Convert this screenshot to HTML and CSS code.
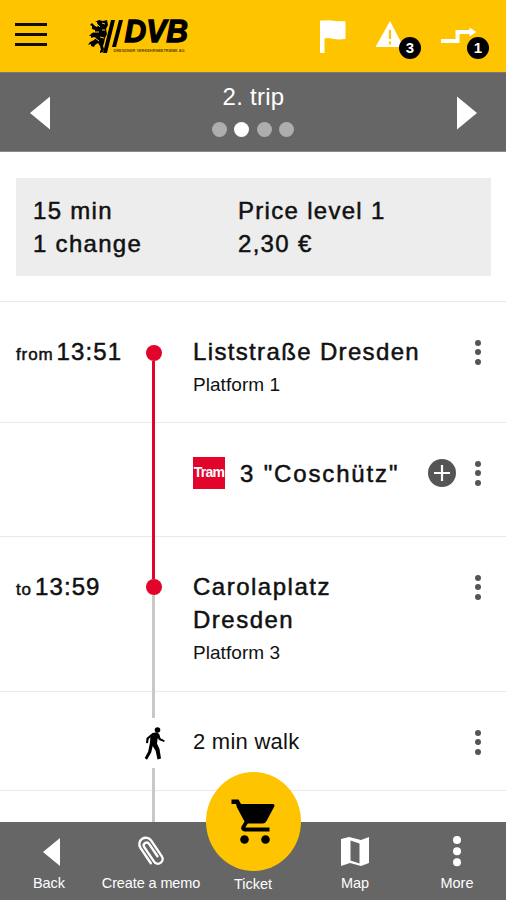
FILE: index.html
```html
<!DOCTYPE html>
<html lang="en">
<head>
<meta charset="utf-8">
<title>DVB trip details</title>
<link rel="stylesheet" href="styles.css">
</head>
<body>
<div class="app">
  <header class="topbar">
    <div class="burger"><span></span><span></span><span></span></div>
    <svg class="logo" width="110" height="46" viewBox="88 11 110 46">
      <path d="M99 20l4 1 4-1 1 5-2 4 1 5-2 4-1 5-1 3 1 3-1 3-3 1v-2l1-1-1-4-2-3-3 2-1 2-3-1v-2l-3 1 2-3 4-2 2-2-2-1-3 1v-2l-2 0 3-3 3-1v-2l-3-1 0-3-2-1 2-2 3 3 2 1 1-1-1-4-2 0z"/>
      <path class="mane" d="M96 23l4 4M102 23l3 1M94 32l5 0M100 37l4 1M95 38l4 3M102 30l3 0"/>
      <path d="M111 20h4l-8 33h-4zM119 20h4l-7 27h-4z"/>
      <text class="logo-name" x="124.500" y="42.200" textLength="63.500" lengthAdjust="spacingAndGlyphs">DVB</text>
      <text class="logo-sub" x="113.500" y="51.700" textLength="71" lengthAdjust="spacingAndGlyphs">DRESDNER VERKEHRSBETRIEBE AG</text>
    </svg>
    <div class="tools">
      <div class="tool flag">
        <svg width="28" height="34" viewBox="319 20 28 34"><path d="M320 20.500h4.500q5-.7 9 .3 5 .7 12 .5V39q-7 .8-12 0-5-1.700-9-.5V53H320z"/></svg>
      </div>
      <div class="tool alert">
        <svg width="28" height="34" viewBox="375 20 28 34"><path d="M390 21l13.500 26H375.500z"/><path class="bang" d="M390 30v9M390 41.500v3"/></svg>
        <span class="badge">3</span>
      </div>
      <div class="tool route">
        <svg width="36" height="34" viewBox="440 20 36 34"><path class="step" d="M441 41h16.500V32H471"/><path d="M469.500 27.500l7 4.500-7 4.500z"/></svg>
        <span class="badge">1</span>
      </div>
    </div>
  </header>

  <section class="tripbar">
    <svg width="20" height="34" viewBox="0 0 20 34"><path d="M20 .5v33L0 17z"/></svg>
    <div class="trip">
      <h1>2. trip</h1>
      <div class="dots"><i></i><i class="on"></i><i></i><i></i></div>
    </div>
    <svg width="20" height="34" viewBox="0 0 20 34"><path d="M0 .5v33L20 17z"/></svg>
  </section>

  <main>
    <div class="summary">
      <div>15 min<br>1 change</div>
      <div>Price level 1<br>2,30 €</div>
    </div>

    <div class="row start">
      <div class="time"><small>from</small>13:51</div>
      <div class="rail"><b class="stop"></b><b class="line red"></b></div>
      <div class="info"><div class="name">Liststraße Dresden</div><div class="platform">Platform 1</div></div>
      <div class="more"><i></i><i></i><i></i></div>
    </div>
    <div class="row ride">
      <div class="time"></div>
      <div class="rail"><b class="line red"></b></div>
      <div class="info">
        <span class="tram">Tram</span><span class="name">3 "Coschütz"</span>
        <svg class="plus" width="28" height="28" viewBox="0 0 28 28"><circle cx="14" cy="14" r="14"/><path d="M14 6v16M6 14h16"/></svg>
      </div>
      <div class="more"><i></i><i></i><i></i></div>
    </div>
    <div class="row end">
      <div class="time"><small>to</small>13:59</div>
      <div class="rail"><b class="line red lead"></b><b class="stop"></b><b class="line"></b></div>
      <div class="info"><div class="name">Carolaplatz<br>Dresden</div><div class="platform">Platform 3</div></div>
      <div class="more"><i></i><i></i><i></i></div>
    </div>
    <div class="row walk">
      <div class="time"></div>
      <div class="rail">
        <b class="line lead"></b>
        <svg width="24" height="34" viewBox="141 725 24 34"><circle cx="156.500" cy="729" r="2.800"/><path d="M151.500 732l4.500-.8 2.300 2 1.200 4 4.300 2.300-.8 1.500-5-2-1.300-2-.7 5.500 2.500 5.500 1.500 9.500-3.500 1-1.800-8.500-3-5-1.500 6.500-4.200 7.200-2.300-1.800 3.500-6.500 1.600-8 .6-6-1.700 1.600-.7 4.200-2-.2.500-5z"/></svg>
        <b class="line"></b>
      </div>
      <div class="info">2 min walk</div>
      <div class="more"><i></i><i></i><i></i></div>
    </div>
    <div class="row rest">
      <div class="time"></div>
      <div class="rail"><b class="line"></b></div>
    </div>
  </main>

  <nav class="bottombar">
    <div class="item"><svg width="32" height="32" viewBox="-1 0 32 32"><path d="M26 3v28L9 17z"/></svg>Back</div>
    <div class="item memo"><svg width="32" height="32" viewBox="0 0 32 32"><path class="clip" transform="translate(16 16) rotate(-34)" d="M-7 10V-8.500A6.500 6.500 0 0 1 6 -8.500V10.500A4.700 4.700 0 0 1 -3.400 10.500V-7A2.900 2.900 0 0 1 2.400 -7V8"/></svg>Create a memo</div>
    <div class="item ticket"><span class="cart"><svg width="44" height="48" viewBox="232 798 44 48"><path d="M232.500 799.500h7l2.500 4.500H274q2 .5 1.300 2.500l-7.500 14q-1.300 3-4 3h-15l-2.500 4H270.500v4h-25q-4.500-1-3-5l3-5-7.500-14-1-3.500h-4.500z"/><circle cx="245.500" cy="839.500" r="4.300"/><circle cx="266.500" cy="839.500" r="4.300"/></svg></span>Ticket</div>
    <div class="item"><svg width="32" height="32" viewBox="0 0 32 32"><path fill-rule="evenodd" d="M2 4l8-2 12 3 8-3v26l-8 3-11-3-9 3zM11.500 5.500v20l9 3V8.500z"/></svg>Map</div>
    <div class="item"><svg width="32" height="32" viewBox="0 0 32 32"><circle cx="16" cy="5" r="4"/><circle cx="16" cy="16.200" r="4"/><circle cx="16" cy="27.300" r="4"/></svg>More</div>
  </nav>
</div>
</body>
</html>
```
FILE: styles.css
```css
* { box-sizing: border-box; }
body {
  margin: 0;
  background: #fff;
  color: #111;
  font-family: "Liberation Sans", Arial, sans-serif;
}
svg { display: block; flex: none; }
.app {
  width: 506px;
  height: 900px;
  display: flex;
  flex-direction: column;
  overflow: hidden;
}

.topbar {
  height: 72px;
  flex: none;
  display: flex;
  background: #ffc400;
}
.burger {
  width: 32px;
  margin: 23px 0 0 14.5px;
  display: flex;
  flex-direction: column;
  gap: 7px;
}
.burger span { height: 3px; background: #120e00; }
.logo { margin: 11px 0 0 41.5px; overflow: visible; }
.mane { stroke: #ffc400; stroke-width: 1; fill: none; }
.logo-name { font: italic bold 31px "Liberation Sans", Arial, sans-serif; stroke: #000; stroke-width: 1.3px; }
.logo-sub { font: bold 4px "Liberation Sans", Arial, sans-serif; fill: #5c4700; }
.tools { display: flex; margin: 20px 0 0 121px; fill: #fff; }
.tool { position: relative; }
.alert { margin-left: 28px; }
.route { margin-left: 37px; }
.bang { stroke: #ffc400; stroke-width: 2.2; }
.step { fill: none; stroke: #fff; stroke-width: 4; }
.badge {
  position: absolute;
  right: -18px;
  top: 17px;
  width: 22px;
  height: 22px;
  border-radius: 50%;
  background: #000;
  color: #fff;
  font-size: 15px;
  font-weight: bold;
  line-height: 22px;
  text-align: center;
}
.route .badge { right: -13px; }

.tripbar {
  height: 80px;
  flex: none;
  display: flex;
  justify-content: space-between;
  padding: 23px 29px 0 30px;
  background: #666;
  border-top: 1px solid #777;
  border-bottom: 1px solid #8a8a8a;
  fill: #fff;
}
.trip { margin-top: -16px; display: flex; flex-direction: column; align-items: center; }
h1 {
  margin: 0;
  color: #fff;
  font-size: 24px;
  font-weight: normal;
  line-height: 33px;
  letter-spacing: .25px;
}
.dots { display: flex; gap: 7.2px; margin: 9px 1px 0 0; }
.dots i { width: 15px; height: 15px; border-radius: 50%; background: #aeaeae; }
.dots .on { background: #fff; }

main { flex: 1; min-height: 0; overflow: hidden; }
.summary {
  height: 98px;
  margin: 26px 15px 25px 16px;
  padding: 16px 17px;
  display: grid;
  grid-template-columns: 205px 1fr;
  background: #ededed;
  font-size: 24px;
  line-height: 33px;
  letter-spacing: 1.3px;
  -webkit-text-stroke: .5px #111;
}
.row {
  display: grid;
  grid-template-columns: 137px 33px 1fr 56px;
  border-top: 1px solid #e9e9e9;
}
.start { height: 121px; }
.ride { height: 114px; }
.end { height: 155px; }
.walk { height: 99px; }
.rest { height: 40px; }
.time {
  padding: 33px 0 0 16px;
  font-size: 24px;
  line-height: 33px;
  letter-spacing: 1.1px;
  white-space: nowrap;
  -webkit-text-stroke: .5px #111;
}
.time small { font-size: 17px; letter-spacing: .9px; margin-right: 3px; }
.rail { display: flex; flex-direction: column; align-items: center; margin-top: -1px; }
.line { flex: 1; width: 3px; background: #c9c9c9; }
.red { background: #e2042b; }
.stop { flex: none; width: 16px; height: 16px; border-radius: 50%; background: #e2042b; }
.start .stop { margin-top: 44px; }
.end .lead { flex: none; height: 43px; }
.walk .lead { flex: none; height: 27px; }
.walk .rail svg { margin: 8px 0; }
.info { padding: 33px 0 0 23px; line-height: 33px; white-space: nowrap; }
.name { font-size: 24px; letter-spacing: 1.35px; -webkit-text-stroke: .5px #111; }
.end .name { letter-spacing: 1.5px; }
.platform { font-size: 19px; letter-spacing: .05px; }
.walk .info { font-size: 22px; letter-spacing: .25px; }
.ride .info { display: flex; align-items: flex-start; padding-top: 34px; }
.tram {
  width: 32px;
  height: 32px;
  background: #e2042b;
  color: #fff;
  font-size: 14px;
  font-weight: bold;
  line-height: 31px;
  letter-spacing: -.7px;
  text-align: center;
}
.ride .name { margin-left: 15px; letter-spacing: 1.85px; }
.plus { margin: 2px 0 0 auto; fill: #555; stroke: none; position: relative; right: -6px; }
.plus path { stroke: #fff; stroke-width: 2.2; }
.more { display: flex; flex-direction: column; align-items: center; gap: 3.5px; padding-top: 37.5px; }
.more i { width: 6px; height: 6px; border-radius: 50%; background: #555; }

.bottombar {
  height: 78px;
  flex: none;
  display: grid;
  grid-template-columns: repeat(5, 102px);
  margin-left: -2px;
  background: #666;
  color: #fff;
}
.item {
  display: flex;
  flex-direction: column;
  align-items: center;
  padding-top: 13px;
  font-size: 14.5px;
  line-height: 18px;
  white-space: nowrap;
  fill: #fff;
}
.item > svg { margin-bottom: 7px; }
.memo { letter-spacing: -.12px; }
.clip { fill: none; stroke: #fff; stroke-width: 2.4; stroke-linecap: round; }
.ticket { padding: 0; }
.cart {
  width: 95px;
  height: 99px;
  flex: none;
  margin: -50px 0 4px;
  display: grid;
  place-items: center;
  border-radius: 50%;
  background: #ffc400;
  fill: #000;
  z-index: 1;
}
```
